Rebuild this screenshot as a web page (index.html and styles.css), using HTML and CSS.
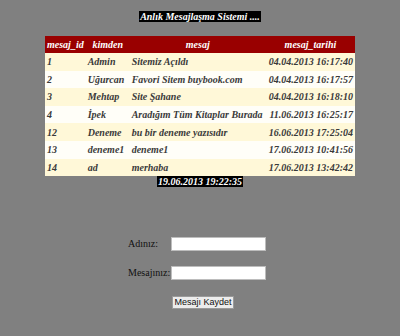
FILE: index.html
```html
<!DOCTYPE html>
<html lang="tr">
<head>
<meta charset="utf-8">
<title>Anlık Mesajlaşma Sistemi</title>
<link rel="stylesheet" href="styles.css">
</head>
<body>
<div class="page">
  <div class="title"><span>Anlık Mesajlaşma Sistemi ....</span></div>
  <table class="messages">
    <thead>
      <tr><th class="c-id">mesaj_id</th><th class="c-from">kimden</th><th class="c-msg">mesaj</th><th class="c-date">mesaj_tarihi</th></tr>
    </thead>
    <tbody>
      <tr><td>1</td><td>Admin</td><td>Sitemiz Açıldı</td><td class="date">04.04.2013 16:17:40</td></tr>
      <tr><td>2</td><td>Uğurcan</td><td>Favori Sitem buybook.com</td><td class="date">04.04.2013 16:17:57</td></tr>
      <tr><td>3</td><td>Mehtap</td><td>Site Şahane</td><td class="date">04.04.2013 16:18:10</td></tr>
      <tr><td>4</td><td>İpek</td><td>Aradığım Tüm Kitaplar Burada</td><td class="date">11.06.2013 16:25:17</td></tr>
      <tr><td>12</td><td>Deneme</td><td>bu bir deneme yazısıdır</td><td class="date">16.06.2013 17:25:04</td></tr>
      <tr><td>13</td><td>deneme1</td><td>deneme1</td><td class="date">17.06.2013 10:41:56</td></tr>
      <tr><td>14</td><td>ad</td><td>merhaba</td><td class="date">17.06.2013 13:42:42</td></tr>
    </tbody>
  </table>
  <div class="now"><span>19.06.2013 19:22:35</span></div>
  <form class="form">
    <div class="field"><label class="lbl" for="ad">Adınız:</label><input class="inp" id="ad" type="text"></div>
    <div class="field"><label class="lbl" for="msg">Mesajınız:</label><input class="inp" id="msg" type="text"></div>
    <div class="actions"><button class="btn" type="button">Mesajı Kaydet</button></div>
  </form>
</div>
</body>
</html>
```
FILE: styles.css
```css
html, body {
  margin: 0;
  padding: 0;
}
body {
  background: #808080;
  font-family: "Liberation Serif", "Times New Roman", serif;
  width: 400px;
  height: 336px;
  overflow: hidden;
}
.page {
  display: flex;
  flex-direction: column;
  align-items: center;
  padding-top: 11px;
}
.title {
  display: flex;
  line-height: 11px;
}
.title span {
  display: block;
  background: #000;
  color: #fff;
  font-weight: bold;
  font-style: italic;
  font-size: 10px;
  line-height: 11px;
  padding: 0 1px;
}
.messages {
  margin-top: 14px;
  width: 310px;
  border-collapse: collapse;
  font-weight: bold;
  font-style: italic;
  font-size: 10px;
  color: #3a3a3a;
}
.messages th {
  background: #990000;
  color: #fff;
  height: 17px;
  padding: 0 2px;
  text-align: center;
  font-weight: bold;
}
.messages td {
  height: 17.6px;
  padding: 0 2px;
  text-align: left;
  white-space: nowrap;
}
.messages tbody tr:nth-child(odd) td {
  background: #fff8d8;
}
.messages tbody tr:nth-child(even) td {
  background: #fffef8;
}
.messages td.date {
  text-align: right;
}
.c-id { width: 34px; }
.c-from { width: 40px; }
.now {
  display: flex;
  line-height: 11px;
}
.now span {
  display: block;
  background: #000;
  color: #fff;
  font-weight: bold;
  font-style: italic;
  font-size: 10px;
  line-height: 11px;
  padding: 0 1px;
}
.form {
  margin-top: 50px;
  display: flex;
  flex-direction: column;
  gap: 15px;
  margin-left: -6px;
}
.field {
  display: grid;
  grid-template-columns: 42px 95px;
  align-items: center;
  column-gap: 1px;
  line-height: 14px;
}
.lbl {
  font-size: 10px;
  color: #111;
  white-space: nowrap;
}
.inp {
  display: block;
  width: 95px;
  height: 14px;
  box-sizing: border-box;
  border: 1px solid #bdbdbd;
  background: #fff;
  padding: 0;
  margin: 0;
}
.actions {
  display: flex;
  justify-content: center;
  margin-top: 1px;
  padding-left: 12px;
}
.btn {
  display: block;
  font-family: "Liberation Sans", Arial, sans-serif;
  font-size: 9px;
  height: 13px;
  padding: 0 1px;
  background: #ececec;
  border: 1px solid #9a9a9a;
  color: #111;
  line-height: 11px;
}
```
